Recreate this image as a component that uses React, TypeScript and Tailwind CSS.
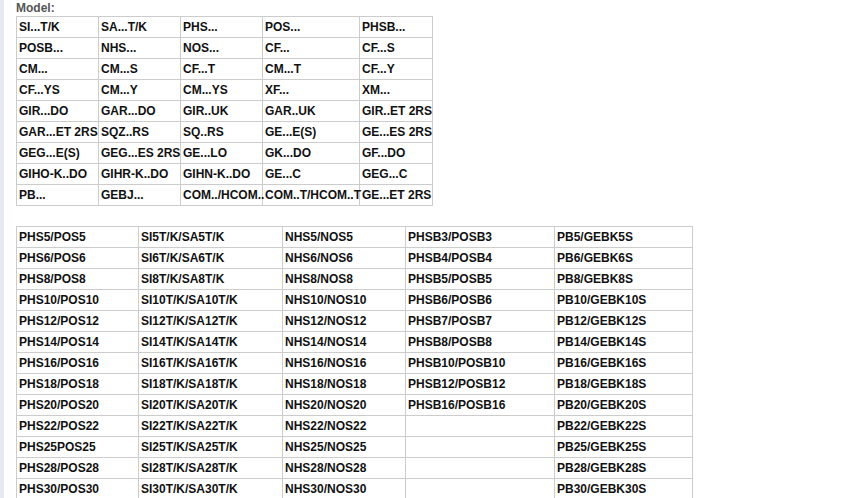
import React from "react";

const MODELS: string[][] = [
  ["SI...T/K", "SA...T/K", "PHS...", "POS...", "PHSB..."],
  ["POSB...", "NHS...", "NOS...", "CF...", "CF...S"],
  ["CM...", "CM...S", "CF...T", "CM...T", "CF...Y"],
  ["CF...YS", "CM...Y", "CM...YS", "XF...", "XM..."],
  ["GIR...DO", "GAR...DO", "GIR..UK", "GAR..UK", "GIR..ET 2RS"],
  ["GAR...ET 2RS", "SQZ..RS", "SQ..RS", "GE...E(S)", "GE...ES 2RS"],
  ["GEG...E(S)", "GEG...ES 2RS", "GE...LO", "GK...DO", "GF...DO"],
  ["GIHO-K..DO", "GIHR-K..DO", "GIHN-K..DO", "GE...C", "GEG...C"],
  ["PB...", "GEBJ...", "COM../HCOM..", "COM..T/HCOM..T", "GE...ET 2RS"],
];

const SIZES = ["5", "6", "8", "10", "12", "14", "16", "18", "20", "22", "25", "28", "30"];
const PHSB = ["3", "4", "5", "6", "7", "8", "10", "12", "16"];

const rows = SIZES.map((n, i) => [
  n === "25" ? "PHS25POS25" : `PHS${n}/POS${n}`,
  `SI${n}T/K/SA${n}T/K`,
  `NHS${n}/NOS${n}`,
  PHSB[i] ? `PHSB${PHSB[i]}/POSB${PHSB[i]}` : "",
  `PB${n}/GEBK${n}S`,
]);

function Grid({ data, widths }: { data: string[][]; widths: number[] }) {
  return (
    <table className="table-fixed border-collapse" style={{ width: widths.reduce((a, b) => a + b, 0) }}>
      <colgroup>
        {widths.map((w, k) => (
          <col key={k} style={{ width: w }} />
        ))}
      </colgroup>
      <tbody>
        {data.map((r, i) => (
          <tr key={i} className="h-[21px]">
            {r.map((c, k) => (
              <td
                key={k}
                className="border border-[#cccccc] pl-[2px] pr-0 py-0 text-[12px] leading-[14px] font-bold text-[#111] whitespace-nowrap"
              >
                {c}
              </td>
            ))}
          </tr>
        ))}
      </tbody>
    </table>
  );
}

export default function App() {
  return (
    <div className="flex min-h-[498px] bg-white font-['Liberation_Sans',Arial,sans-serif]">
      <div className="w-[4px] shrink-0 bg-[#e4eaf1]" />
      <div className="pl-[12px]">
        <div className="h-[16px] pt-[2px] text-[12px] leading-[13px] font-bold text-[#555]">Model:</div>
        <Grid data={MODELS} widths={[82, 82, 82, 97, 73]} />
        <div className="h-[20px]" />
        <Grid data={rows} widths={[122, 144, 123, 149, 138]} />
      </div>
    </div>
  );
}
